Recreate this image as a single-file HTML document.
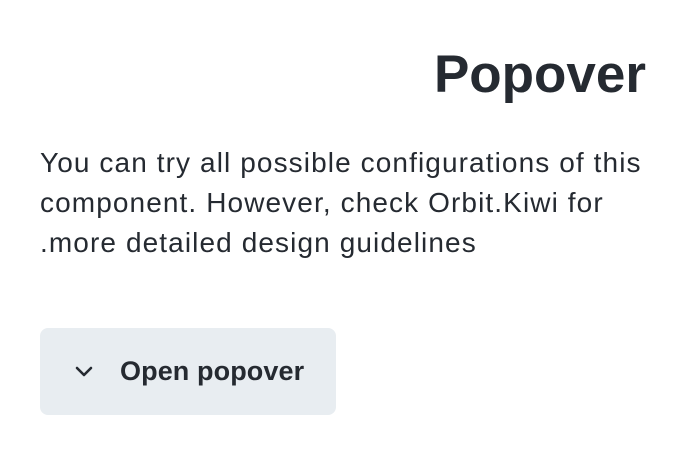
<!DOCTYPE html>
<html><head><meta charset="utf-8"><style>
html,body{margin:0;padding:0;background:#fff;width:686px;height:456px;overflow:hidden}
body{font-family:"Liberation Sans",sans-serif;color:#252a31;position:relative}
h1{position:absolute;right:40px;top:40px;margin:0;font-size:53px;font-weight:bold;line-height:70px;letter-spacing:0}
.p{position:absolute;left:40px;font-size:28px;white-space:nowrap;line-height:40px;letter-spacing:1.1px}
.btn{position:absolute;left:40px;top:328px;width:296px;height:87px;background:#e8edf1;border-radius:8px}
.btn span{position:absolute;left:80px;top:0;line-height:87px;font-size:27px;font-weight:bold;letter-spacing:0.1px}
.btn svg{position:absolute;left:32px;top:32px}
</style></head><body>
<h1>Popover</h1>
<div class="p" style="top:143px">You can try all possible configurations of this</div>
<div class="p" style="top:183px">component. However, check Orbit.Kiwi for</div>
<div class="p" style="top:223px">.more detailed design guidelines</div>
<div class="btn"><svg width="24" height="24" viewBox="0 0 24 24"><path d="M5 8l7 7 7-7" fill="none" stroke="#252a31" stroke-width="2.6" stroke-linecap="round" stroke-linejoin="round"/></svg><span>Open popover</span></div>
</body></html>
